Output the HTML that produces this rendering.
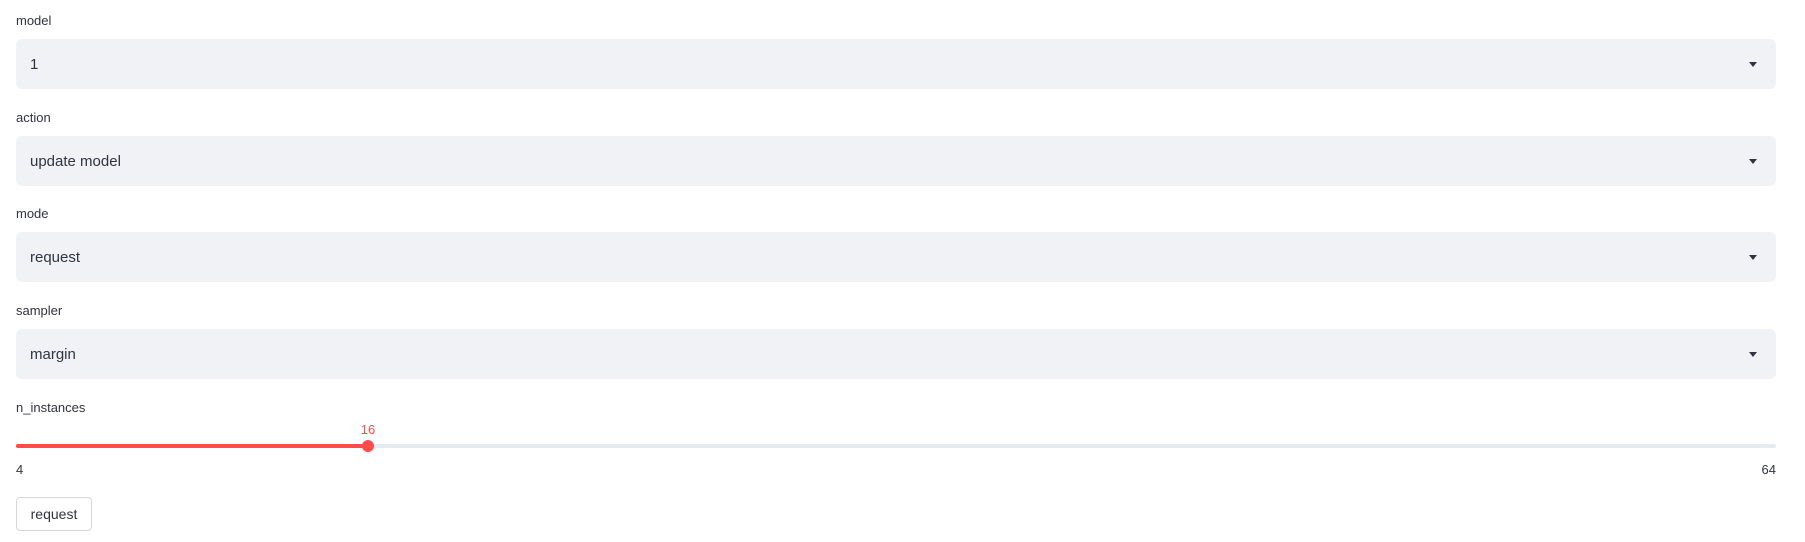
<!DOCTYPE html>
<html><head><style>
body{margin:0;width:1805px;height:542px;background:#fff;font-family:"Liberation Sans",sans-serif;color:#31333f;position:relative;overflow:hidden}
.l{position:absolute;left:16px;font-size:13px;top:0}
.b{position:absolute;left:16px;width:1760px;height:50px;background:#f0f2f6;border-radius:6px}
.b span{position:absolute;left:14px;top:17px;font-size:15px}
.b i{position:absolute;right:19px;top:23px;width:0;height:0;border-left:4px solid transparent;border-right:4px solid transparent;border-top:5px solid #31333f}
</style></head><body>
<div class="l" style="top:13px">model</div>
<div class="b" style="top:39px"><span>1</span><i></i></div>
<div class="l" style="top:110px">action</div>
<div class="b" style="top:136px"><span>update model</span><i></i></div>
<div class="l" style="top:206px">mode</div>
<div class="b" style="top:232px"><span>request</span><i></i></div>
<div class="l" style="top:303px">sampler</div>
<div class="b" style="top:329px"><span>margin</span><i></i></div>
<div class="l" style="top:400px">n_instances</div>
<div style="position:absolute;left:16px;top:444px;width:1760px;height:4px;background:#e6eaf1;border-radius:2px"></div>
<div style="position:absolute;left:16px;top:444px;width:352px;height:4px;background:#ff4b4b;border-radius:2px"></div>
<div style="position:absolute;left:362px;top:440px;width:12px;height:12px;background:#ff4b4b;border-radius:50%"></div>
<div style="position:absolute;left:358px;top:422px;font-size:13px;color:#ff4b4b;width:20px;text-align:center">16</div>
<div style="position:absolute;left:16px;top:462px;font-size:13px">4</div>
<div style="position:absolute;right:29px;top:462px;font-size:13px">64</div>
<div style="position:absolute;left:16px;top:497px;width:74px;height:32px;border:1px solid #d6d6d9;border-radius:4px;font-size:14px;line-height:33px;text-align:center">request</div>
</body></html>
